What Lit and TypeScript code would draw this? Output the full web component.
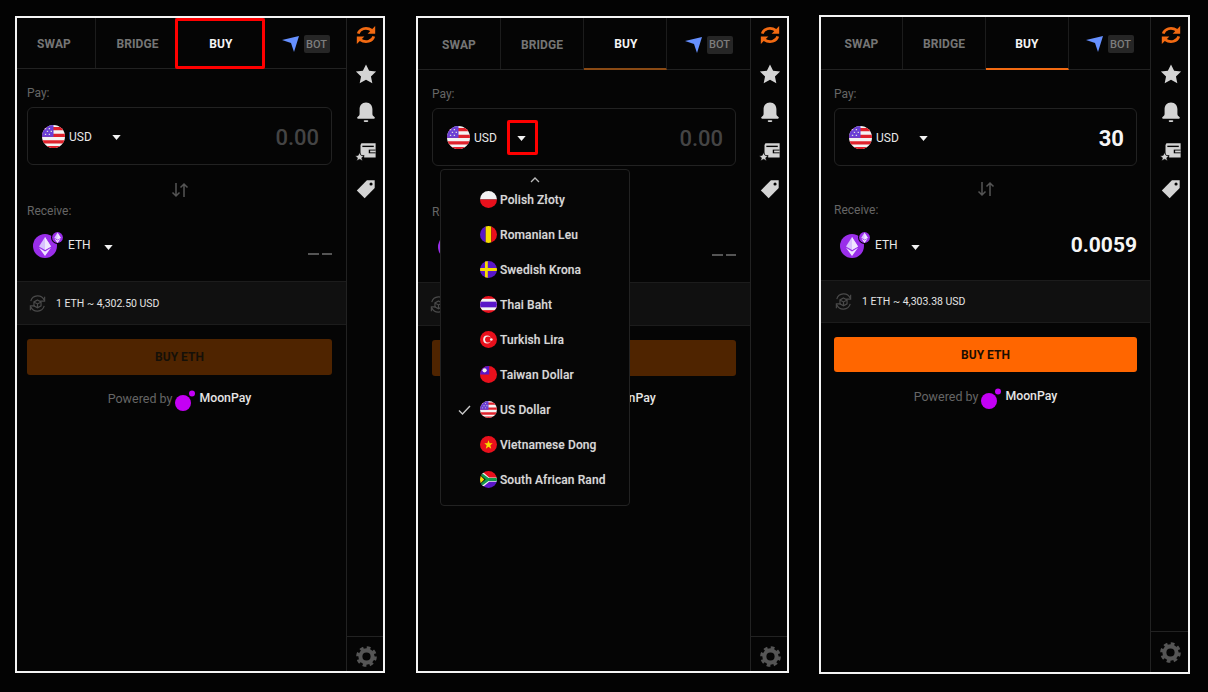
import { LitElement, html, css, svg, nothing } from "lit";
import { customElement, property } from "lit/decorators.js";

const flags: Record<string, unknown> = {
  us: svg`<rect width="24" height="24" fill="#f4f4f4"/><path d="M0 2h24v3.4H0zM0 9h24v3.4H0zM0 16h24v3.4H0zM0 22h24v2H0z" fill="#e0222c"/><rect width="12" height="12.4" fill="#6a3fd6"/><path d="M3 3h1.4v1.4H3zM7 3h1.4v1.4H7zM5 6h1.4v1.4H5zM9 6h1.4v1.4H9zM3 9h1.4v1.4H3zM7 9h1.4v1.4H7z" fill="#ddd"/>`,
  pl: svg`<rect width="24" height="12" fill="#f2f2f2"/><rect y="12" width="24" height="12" fill="#e8101c"/>`,
  ro: svg`<rect width="8" height="24" fill="#5a16c8"/><rect x="8" width="8" height="24" fill="#f7dc00"/><rect x="16" width="8" height="24" fill="#e8101c"/>`,
  se: svg`<rect width="24" height="24" fill="#5a16c8"/><path d="M7 0h4v24H7zM0 10h24v4H0z" fill="#f7dc00"/>`,
  th: svg`<rect width="24" height="24" fill="#e8101c"/><rect y="4" width="24" height="16" fill="#f2f2f2"/><rect y="8" width="24" height="8" fill="#5a16c8"/>`,
  tr: svg`<rect width="24" height="24" fill="#e8101c"/><circle cx="10" cy="12" r="5.5" fill="#f2f2f2"/><circle cx="11.5" cy="12" r="4.4" fill="#e8101c"/><circle cx="16" cy="12" r="1.9" fill="#f2f2f2"/>`,
  tw: svg`<rect width="24" height="24" fill="#e8101c"/><rect width="13" height="12" fill="#5a16c8"/><circle cx="6.5" cy="6" r="3" fill="#eee"/>`,
  vn: svg`<rect width="24" height="24" fill="#e8101c"/><polygon points="12,6 13.6,10.4 18,10.4 14.6,13.2 15.8,18 12,15.2 8.2,18 9.4,13.2 6,10.4 10.4,10.4" fill="#f7dc00"/>`,
  za: svg`<rect width="24" height="12" fill="#e8101c"/><rect y="12" width="24" height="12" fill="#5a16c8"/><path d="M0 0l12 12L0 24z" fill="#111"/><path d="M0 -2L13 9h11v6H13L0 26v-5l9-9L0 3z" fill="#eee"/><path d="M0 1l12 9h12v4H12L0 23v-4l8-7-8-7z" fill="#139a4a"/><path d="M0 6l6 6-6 6z" fill="#f7dc00"/>`,
};
const flag = (c: string) => html`<svg class="flag" viewBox="0 0 24 24">${flags[c]}</svg>`;

const eth = svg`<path d="M12 3l6 9.4L12 16l-6-3.6z" fill="#d9c2ff"/><path d="M12 3v13l6-3.6z" fill="#f0e6ff"/><path d="M6 13.8L12 17.4l6-3.6L12 22z" fill="#efe4ff"/>`;
const ethIcon = html`<span class="eth"><svg class="coin" viewBox="0 0 24 24"><circle cx="12" cy="12" r="12" fill="#9a2eea"/>${eth}</svg><svg class="chain" viewBox="0 0 24 24"><circle cx="12" cy="12" r="12" fill="#050505"/><circle cx="12" cy="12" r="10" fill="#9a2eea"/>${eth}</svg></span>`;

const caret = html`<svg class="caret" viewBox="0 0 10 6"><path d="M0 0h10L5 6z" fill="#f2f2f2"/></svg>`;

const railIcons = html`
  <svg class="ri" viewBox="0 0 24 24" fill="none" stroke="#f26a12" stroke-width="3"><path d="M3.5 10.5C5 5.5 12 2.5 18.5 7"/><path d="M22 2.2v8.3h-8.2z" fill="#f26a12" stroke="none"/><path d="M20.5 13.5C19 18.5 12 21.5 5.5 17"/><path d="M2 21.8v-8.3h8.2z" fill="#f26a12" stroke="none"/></svg>
  <svg class="ri" viewBox="0 0 24 24"><polygon points="12,1.5 15.4,8.4 23,9.4 17.4,14.6 18.9,22.2 12,18.4 5.1,22.2 6.6,14.6 1,9.4 8.6,8.4" fill="#d4d4d4"/></svg>
  <svg class="ri" viewBox="0 0 24 24"><path d="M12 1.5c4.6 0 7 3.4 7 7.6v5.2c0 1.6 1 2.4 2.2 3.2.9.7.5 1.8-.6 1.8H3.4c-1.1 0-1.5-1.1-.6-1.8C4 16.7 5 15.9 5 14.3V9.1c0-4.2 2.4-7.6 7-7.6z" fill="#d4d4d4"/><rect x="9.5" y="21" width="5" height="1.8" rx=".9" fill="#d4d4d4"/></svg>
  <svg class="ri" viewBox="0 0 24 24"><path d="M6 5.5l1-2h15.5v15.5H10v-2H6z" fill="#d4d4d4"/><path d="M8 6.2h12.5v1.5H8z" fill="#050505"/><path d="M15 10.5h7.5v4H15z" fill="#050505"/><rect x="16.5" y="11.5" width="6" height="2" fill="#d4d4d4"/><polygon points="5,13.5 6.5,16.7 10,17.1 7.4,19.4 8.1,22.8 5,21.1 1.9,22.8 2.6,19.4 0,17.1 3.5,16.7" fill="#d4d4d4" stroke="#050505" stroke-width=".8"/></svg>
  <svg class="ri" viewBox="0 0 24 24"><path d="M13 2.5h8.5v8.5L10.5 22 2 13.5z" fill="#d4d4d4"/><circle cx="17.5" cy="6.5" r="1.7" fill="#050505"/></svg>`;

const gear = html`<svg class="gear" viewBox="0 0 24 24"><circle cx="12" cy="12" r="10" fill="none" stroke="#555" stroke-width="3.6" stroke-dasharray="4.2 3.65"/><circle cx="12" cy="12" r="7" fill="none" stroke="#555" stroke-width="4.6"/></svg>`;

const rateIcon = html`<svg class="rate" viewBox="0 0 24 24" fill="none" stroke="#4a4a4a" stroke-width="1.5"><path d="M3.5 9A9 9 0 0 1 20.5 8"/><path d="M20.5 15A9 9 0 0 1 3.5 16"/><path d="M21 3.5V9h-5.5M3 20.5V15h5.5"/><path d="M12 7.5l4.5 2.5v5L12 17.5 7.5 15v-5zM7.5 10l4.5 2.5 4.5-2.5M12 12.5v5"/></svg>`;

const currencies = [
  ["pl", "Polish Złoty"], ["ro", "Romanian Leu"], ["se", "Swedish Krona"],
  ["th", "Thai Baht"], ["tr", "Turkish Lira"], ["tw", "Taiwan Dollar"],
  ["us", "US Dollar"], ["vn", "Vietnamese Dong"], ["za", "South African Rand"],
];

@customElement("trade-panel")
class TradePanel extends LitElement {
  @property({ type: Object }) cfg: any = {};
  static styles = css`
    :host { display: block; flex: none; font-family: Roboto, "Liberation Sans", sans-serif; }
    * { box-sizing: border-box; }
    .panel { position: relative; height: 100%; border: 2px solid #f4f4f4; background: #050505; display: flex; }
    .main { flex: 1; min-width: 0; display: flex; flex-direction: column; }
    .tabs { display: flex; flex: none; border-bottom: 1px solid #222; }
    .tab { display: flex; align-items: center; justify-content: center; padding-top: 2px; font-size: 12px; letter-spacing: .1px; font-weight: 700; color: #757575; border-right: 1px solid #1c1c1c; }
    .tab.on { color: #f4f4f4; }
    .tab.line { border-bottom: 2px solid; margin-bottom: -1px; }
    .bot { flex: 1; display: flex; align-items: center; justify-content: center; gap: 4px; padding-top: 2px; }
    .plane { width: 18px; height: 18px; }
    .badge { width: 26px; height: 18px; background: #262626; border-radius: 2px; color: #7d7d7d; font-size: 11px; font-weight: 500; display: flex; align-items: center; justify-content: center; }
    .form { padding-top: 17px; }
    .label { font-size: 12px; line-height: 14px; color: #666; height: 14px; }
    .field { margin-top: 7px; height: 58px; border: 1px solid #222; border-radius: 6px; display: flex; align-items: center; padding: 0 12px 0 14px; }
    .flag { width: 23px; height: 23px; border-radius: 50%; flex: none; display: block; }
    .code { font-size: 12px; color: #e8e8e8; margin: 1px 0 0 4px; font-weight: 400; }
    .caret { width: 9px; height: 5px; flex: none; margin: 2px 0 0 20px; }
    .val { margin-left: auto; padding-top: 2px; font-size: 22px; font-weight: 500; color: #444; }
    .val.on { color: #f6f6f6; font-weight: 700; }
    .swap { display: flex; align-items: flex-end; justify-content: center; padding-bottom: 5px; }
    .swap svg { width: 18px; height: 18px; }
    .asset { display: flex; align-items: flex-start; padding-left: 6px; }
    .eth { position: relative; width: 24px; height: 25px; flex: none; }
    .coin { width: 24px; height: 24px; position: absolute; left: 0; top: 1px; }
    .chain { width: 13px; height: 13px; position: absolute; left: 18px; top: -2px; }
    .asset .code { margin: 5px 0 0 11px; }
    .asset .caret { margin: 12px 0 0 13px; }
    .dash { margin-left: auto; display: flex; gap: 3px; margin-top: 20px; }
    .dash i { display: block; width: 10.5px; height: 2px; background: #555; }
    .amount { margin-left: auto; font-size: 21px; font-weight: 700; color: #f6f6f6; }
    .band { flex: none; background: #101010; border-top: 1px solid #1c1c1c; border-bottom: 1px solid #1c1c1c; display: flex; align-items: center; font-size: 10.5px; color: #e4e4e4; gap: 9px; }
    .rate { width: 19px; height: 19px; }
    .buy { margin-top: 14px; border-radius: 3px; background: #4f2400; color: #151008; font-size: 12px; font-weight: 700; display: flex; align-items: center; justify-content: center; }
    .buy.on { background: #ff6600; color: #1a0d02; }
    .power { display: flex; align-items: center; justify-content: center; font-size: 12.5px; color: #666; height: 16px; }
    .moon { width: 24px; height: 22px; margin: 6px 2px 0 1px; flex: none; }
    .mp { color: #e6e6e6; font-weight: 500; font-size: 12.3px; }
    .rail { flex: none; border-left: 1px solid #222; display: flex; flex-direction: column; align-items: center; padding-left: 2px; gap: 16.6px; }
    .ri { width: 22px; height: 22px; display: block; flex: none; }
    .foot { margin: auto 0 0 -2px; padding-left: 2px; align-self: stretch; border-top: 1px solid #222; display: flex; align-items: center; justify-content: center; }
    .gear { width: 21px; height: 21px; }
    .menu { position: absolute; left: 22px; top: 151px; width: 190px; height: 337px; background: #060606; border: 1px solid #222; border-radius: 4px; padding-top: 5px; }
    .up { display: block; width: 10px; height: 6px; margin: 2px 0 0 89px; }
    .item { height: 35px; display: flex; align-items: center; font-size: 12px; letter-spacing: .1px; font-weight: 500; color: #d8d8d8; text-shadow: 0 0 1px rgba(255,255,255,.35); position: relative; padding-left: 39px; gap: 3px; }
    .list { margin-top: -1px; }
    .item .flag { width: 17px; height: 17px; }
    .check { position: absolute; left: 17px; width: 13px; height: 10px; }
    .mark { position: absolute; border: 3px solid #f00; border-radius: 2px; }
  `;
  render() {
    const c = this.cfg;
    const typed = !!c.pay;
    const side = `margin-left:${c.pad[0]}px;margin-right:${c.pad[1]}px`;
    return html`<div class="panel">
      <div class="main">
        <div class="tabs" style="height:${c.tabsH}px">
          ${c.tabs.map((w: number, i: number) => html`<div class="tab ${i === 2 ? "on" : ""} ${i === 2 && c.line ? "line" : ""}" style="width:${w}px;padding-left:${c.tabPad[i][0]}px;padding-right:${c.tabPad[i][1]}px;${i === 2 ? `border-bottom-color:${c.line || "transparent"}` : ""}">${["SWAP", "BRIDGE", "BUY"][i]}</div>`)}
          <div class="bot"><svg class="plane" viewBox="0 0 18 18"><path d="M0 5L17 1l-5 16-3-9z" fill="#6690ff"/></svg><span class="badge">BOT</span></div>
        </div>
        <div class="form" style="${side}">
          <div class="label">Pay:</div>
          <div class="field">${flag("us")}<span class="code">USD</span>${caret}<span class="val ${typed ? "on" : ""}">${c.pay || "0.00"}</span></div>
          <div class="swap" style="height:${c.swapH}px"><svg viewBox="0 0 18 18" fill="none" stroke="#555" stroke-width="1.5"><path d="M5 2v13M1.5 11.5L5 15l3.5-3.5M13 16V3M9.5 6.5L13 3l3.5 3.5"/></svg></div>
          <div class="label">Receive:</div>
          <div class="asset" style="height:63px;padding-top:${c.assetTop}px">${ethIcon}<span class="code">ETH</span>${caret}
            ${c.get ? html`<span class="amount">${c.get}</span>` : html`<span class="dash"><i></i><i></i></span>`}
          </div>
        </div>
        <div class="band" style="height:${c.bandH}px;padding-left:${c.bandPad}px">${rateIcon}<span>1 ETH ~ ${c.rate} USD</span></div>
        <div class="buy ${typed ? "on" : ""}" style="height:${c.btnH}px;${side}">BUY ETH</div>
        <div class="power" style="margin-top:${c.powerGap}px;${side}">Powered by<svg class="moon" viewBox="0 0 24 22"><circle cx="10" cy="13" r="8" fill="#c400f5"/><circle cx="19" cy="3.4" r="3" fill="#c400f5"/></svg><span class="mp">MoonPay</span></div>
      </div>
      <div class="rail" style="width:${c.railW}px;padding-top:${c.railTop}px">${railIcons}<div class="foot" style="height:${c.footH}px;padding-top:${c.footTop}px">${gear}</div></div>
      ${c.menu ? html`<div class="menu">
        <svg class="up" viewBox="0 0 10 6" fill="none" stroke="#bbb" stroke-width="1.3"><path d="M1 5l4-4 4 4"/></svg>
        <div class="list">${currencies.map(([k, n]) => html`<div class="item">${k === "us" ? html`<svg class="check" viewBox="0 0 13 10" fill="none" stroke="#c8c8c8" stroke-width="1.4"><path d="M1 5.5l3.5 3.5L12 1"/></svg>` : nothing}${flag(k)}<span>${n}</span></div>`)}</div>
      </div>` : nothing}
      ${c.mark ? html`<div class="mark" style="left:${c.mark[0]}px;top:${c.mark[1]}px;width:${c.mark[2]}px;height:${c.mark[3]}px"></div>` : nothing}
    </div>`;
  }
}

const panels = [
  { gap: 15, top: 16, w: 370, h: 657, tabsH: 51, tabs: [79, 80, 89], tabPad: [[0, 4], [4, 0], [2, 0]], line: "", pad: [10, 14], swapH: 39, assetTop: 15, bandPad: 11, bandH: 44, btnH: 36, powerGap: 15, railW: 37, railTop: 6, footH: 35, footTop: 5, rate: "4,302.50", mark: [158, 0, 90, 51] },
  { gap: 31, top: 16, w: 373, h: 657, tabsH: 52, tabs: [83, 83, 83], tabPad: [[0, 0], [0, 0], [2, 0]], line: "#8a4a14", pad: [14, 14], swapH: 39, assetTop: 15, bandPad: 11, bandH: 44, btnH: 36, powerGap: 14, railW: 37, railTop: 6, footH: 35, footTop: 5, rate: "4,302.50", menu: true, mark: [89, 102, 31, 35] },
  { gap: 30, top: 15, w: 371, h: 659, tabsH: 53, tabs: [82, 83, 83], tabPad: [[0, 0], [0, 0], [0, 0]], line: "#f26a12", pad: [13, 13], swapH: 37, assetTop: 16, bandPad: 13, bandH: 43, btnH: 35, powerGap: 16, railW: 38, railTop: 7, footH: 41, footTop: 0, rate: "4,303.38", pay: "30", get: "0.0059" },
];

@customElement("app-root")
class AppRoot extends LitElement {
  static styles = css`
    :host { display: flex; align-items: flex-start; width: 1208px; height: 692px; background: #030303; overflow: hidden; }
  `;
  render() {
    return panels.map((p) => html`<trade-panel .cfg=${p} style="margin:${p.top}px 0 0 ${p.gap}px;width:${p.w}px;height:${p.h}px"></trade-panel>`);
  }
}
